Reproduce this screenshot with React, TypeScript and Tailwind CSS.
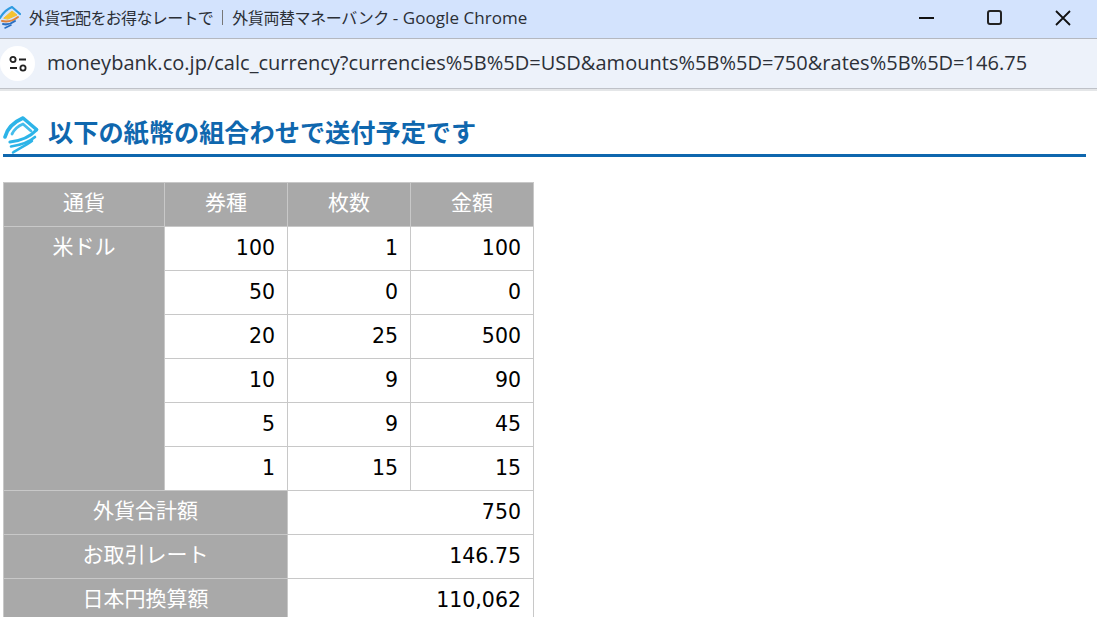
const cjk = "font-['Noto_Sans_CJK_JP',sans-serif]";
const num = "font-['DejaVu_Sans',sans-serif]";

function HeadingLogo() {
  return (
    <svg width="36" height="38" viewBox="0 0 36 38" fill="none" stroke="#2db4e8" strokeLinejoin="round" strokeLinecap="round">
      <path d="M2 21 C4 13 11 6 20 2 L33.5 13.5" strokeWidth="3.6" />
      <path d="M9 18 C11 14 15 10 20 8 L28 15" strokeWidth="2.8" stroke="#45bdec" />
      <path d="M33.5 14 C26 22 16 25 7 26" strokeWidth="3.2" />
      <path d="M32 21 C25 27 15 29.5 8 30.5" strokeWidth="2.6" />
      <path d="M29 25 C22 30 15 33 10 36.5" strokeWidth="2.4" />
    </svg>
  );
}

function Favicon() {
  return (
    <svg width="22" height="24" viewBox="0 0 22 24" fill="none" strokeLinecap="round" strokeLinejoin="round">
      <path d="M1 12 C4 7 8 3 13 1 L21 8" stroke="#2f9be0" strokeWidth="2.2" />
      <path d="M5 12 L13 5 L18 9 L9 13 Z" fill="#f4c230" stroke="#f4c230" />
      <path d="M19 11 C14 15 8 16 3 15" stroke="#e0823a" strokeWidth="2" />
      <path d="M16 15 C12 18 8 19 4 18" stroke="#2a6fc2" strokeWidth="2" />
      <path d="M12 19 C10 20 8 21 6 22" stroke="#2a6fc2" strokeWidth="1.6" />
    </svg>
  );
}

const rows = [
  [100, 1, 100],
  [50, 0, 0],
  [20, 25, 500],
  [10, 9, 90],
  [5, 9, 45],
  [1, 15, 15],
];
const totals = [
  ["外貨合計額", "750"],
  ["お取引レート", "146.75"],
  ["日本円換算額", "110,062"],
];
const head = `border border-[#c8c8c8] bg-[#a9a9a9] text-white font-normal text-center align-top px-3 pt-[4px] h-11 text-[21px] leading-[28px] ${cjk}`;
const cell = `border border-[#c8c8c8] bg-white text-black text-right align-top px-3 pt-[7px] h-11 text-[20.5px] leading-[28px] ${num}`;

export default function App() {
  return (
    <div className="w-[1097px] h-[617px] overflow-hidden bg-white flex flex-col">
      <div className="h-[39px] shrink-0 bg-[#d3e3fd] border-b border-[#b4b8c0] flex items-center pr-[26px] pb-[3px]">
        <div className="-ml-px flex"><Favicon /></div>
        <span className={`ml-2 -mt-[2px] text-[16px] tracking-[-0.65px] text-[#2b2f36] whitespace-nowrap ${cjk}`}>外貨宅配をお得なレートで</span>
        <div className="ml-[9px] w-px h-[15px] bg-[#777]" />
        <span className={`ml-[9px] -mt-[2px] text-[16px] tracking-[-0.4px] text-[#2b2f36] whitespace-nowrap ${cjk}`}>外貨両替マネーバンク</span>
        <span className="ml-[4px] text-[17px] tracking-[0.05px] text-[#2b2f36] whitespace-nowrap font-['Open_Sans',sans-serif]">- Google Chrome</span>
        <div className="ml-auto flex items-center gap-[53px]">
          <div className="w-[15px] h-[2px] bg-[#111]" />
          <div className="w-[15px] h-[15px] rounded-[3px] border-2 border-[#222]" />
          <svg width="16" height="16" viewBox="0 0 16 16" stroke="#111" strokeWidth="1.8" fill="none">
            <path d="M1 1 L15 15 M15 1 L1 15" />
          </svg>
        </div>
      </div>
      <div className="h-[50px] shrink-0 bg-[#edf2fa] border-b border-[#bfc2c8] flex items-center">
        <div className="w-[35px] h-[35px] shrink-0 rounded-full bg-white flex items-center justify-center">
          <svg width="20" height="18" viewBox="0 0 20 18" fill="none" stroke="#222" strokeWidth="1.8">
            <circle cx="5" cy="4.5" r="2.6" />
            <path d="M11 4.5 H18 M2 13 H9" />
            <circle cx="15" cy="13" r="2.6" />
          </svg>
        </div>
        <span className="ml-[12px] pb-[1px] text-[20px] tracking-[0.02px] text-[#2c3038] font-['Open_Sans',sans-serif] whitespace-nowrap">
          moneybank.co.jp/calc_currency?currencies%5B%5D=USD&amounts%5B%5D=750&rates%5B%5D=146.75
        </span>
      </div>
      <div className="h-[2px] shrink-0 bg-[#e4e6e8]" />
      <div className="pl-[3px] pr-[11px]">
        <div className="mt-[25px] h-[41px] border-b-[3px] border-[#0f67ae] flex items-center">
          <HeadingLogo />
          <h1 className={`ml-[9px] mb-[6px] text-[25.2px] font-bold text-[#0f67ae] leading-none ${cjk}`}>以下の紙幣の組合わせで送付予定です</h1>
        </div>
        <table className="mt-[25px] border-collapse table-fixed w-[530px]">
          <colgroup>
            <col className="w-[161px]" />
            <col className="w-[123px]" />
            <col className="w-[123px]" />
            <col className="w-[123px]" />
          </colgroup>
          <tbody>
            <tr>
              {["通貨", "券種", "枚数", "金額"].map((t) => (
                <th key={t} className={head}>{t}</th>
              ))}
            </tr>
            {rows.map((r, i) => (
              <tr key={i}>
                {i === 0 && <th rowSpan={6} className={head}>米ドル</th>}
                {r.map((v, j) => (
                  <td key={j} className={cell}>{v}</td>
                ))}
              </tr>
            ))}
            {totals.map(([k, v]) => (
              <tr key={k}>
                <th colSpan={2} className={head}>{k}</th>
                <td colSpan={2} className={cell}>{v}</td>
              </tr>
            ))}
          </tbody>
        </table>
      </div>
    </div>
  );
}
